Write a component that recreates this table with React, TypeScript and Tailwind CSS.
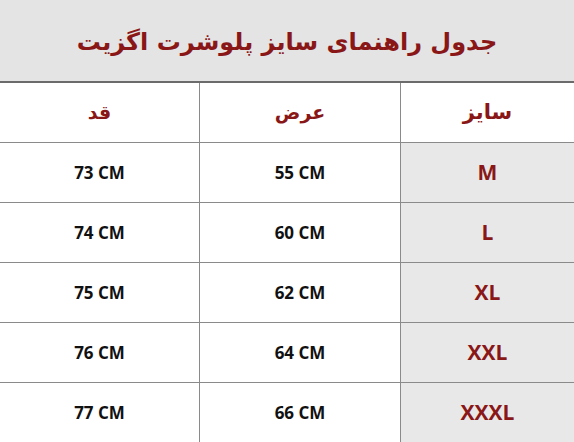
const rows = [
  { size: 'M', width: '55 CM', height: '73 CM' },
  { size: 'L', width: '60 CM', height: '74 CM' },
  { size: 'XL', width: '62 CM', height: '75 CM' },
  { size: 'XXL', width: '64 CM', height: '76 CM' },
  { size: 'XXXL', width: '66 CM', height: '77 CM' },
];

export default function App() {
  return (
    <div className="w-[574px] h-[442px] overflow-hidden bg-white font-['Open_Sans','DejaVu_Sans',sans-serif]">
      {/* Title band */}
      <div className="h-[83px] bg-[#e4e4e4] flex items-center justify-center border-b-2 border-[#6b6b6b]">
        <h1 dir="rtl" className="text-[24px] font-bold text-[#8a1717] font-['DejaVu_Sans',sans-serif] pt-[2px]">
          جدول راهنمای سایز پلوشرت اگزیت
        </h1>
      </div>

      {/* Table */}
      <div className="grid grid-cols-[200px_201px_1fr]">
        <div className="h-[60px] flex items-center justify-center border-r border-b border-[#8a8a8a] text-[#8a1717] font-bold text-[19px] font-['DejaVu_Sans',sans-serif]" dir="rtl">
          قد
        </div>
        <div className="h-[60px] flex items-center justify-center border-r border-b border-[#8a8a8a] text-[#8a1717] font-bold text-[19px] font-['DejaVu_Sans',sans-serif]" dir="rtl">
          عرض
        </div>
        <div className="h-[60px] flex items-center justify-center border-b border-[#8a8a8a] text-[#8a1717] font-bold text-[21px] font-['DejaVu_Sans',sans-serif]" dir="rtl">
          سایز
        </div>

        {rows.map((r) => (
          <div key={r.size} className="contents">
            <div className="h-[60px] flex items-center justify-center border-r border-b border-[#8a8a8a] text-[#111] font-bold text-[17px]">
              {r.height}
            </div>
            <div className="h-[60px] flex items-center justify-center border-r border-b border-[#8a8a8a] text-[#111] font-bold text-[17px]">
              {r.width}
            </div>
            <div className="h-[60px] flex items-center justify-center border-b border-[#8a8a8a] bg-[#e8e8e8] text-[#8a1717] font-bold text-[21px]">
              {r.size}
            </div>
          </div>
        ))}
      </div>
    </div>
  );
}
